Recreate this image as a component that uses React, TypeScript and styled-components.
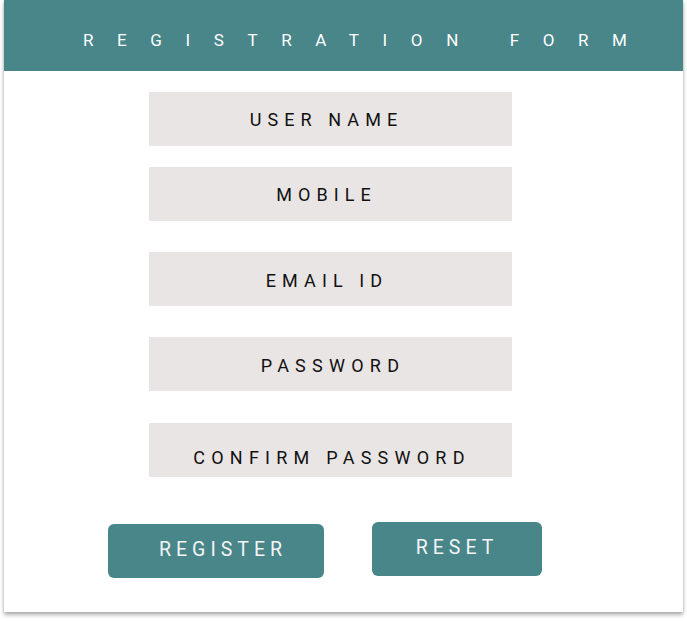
import React from "react";
import styled, { createGlobalStyle } from "styled-components";

const Global = createGlobalStyle`
  html, body { margin: 0; padding: 0; background: #ffffff; }
  body { font-family: Roboto, "Liberation Sans", sans-serif; }
  * { box-sizing: border-box; }
`;

const Card = styled.div`
  width: 679px;
  margin: 0 4px 10px;
  background: #ffffff;
  box-shadow: 0 3px 4px rgba(0, 0, 0, 0.3), 0 0 3px rgba(0, 0, 0, 0.14);
  padding-bottom: 34px;
`;

const Header = styled.header`
  height: 71px;
  background: #48868a;
  padding: 30px 0 0 79px;
`;

const Title = styled.h1`
  margin: 0;
  font-family: Roboto, "Liberation Sans", sans-serif;
  font-weight: 400;
  font-size: 17px;
  line-height: 20px;
  letter-spacing: 23.6px;
  color: #ffffff;
  white-space: pre;
`;

const Form = styled.form`
  display: flex;
  flex-direction: column;
  align-items: flex-start;
  padding: 21px 0 0 145px;
`;

const Field = styled.input<{ $gap: number; $shift?: number; $dx?: number }>`
  width: 363px;
  height: 54px;
  margin-top: ${(p) => p.$gap}px;
  border: none;
  outline: none;
  background: #e9e5e4;
  padding-top: ${(p) => (p.$shift ?? 0) * 2}px;
  padding-bottom: 0;
  padding-left: ${(p) => Math.max(0, (p.$dx ?? 0) * 2)}px;
  padding-right: ${(p) => Math.max(0, -(p.$dx ?? 0) * 2)}px;
  text-align: center;
  font-family: Roboto, "Liberation Sans", sans-serif;
  font-size: 18px;
  letter-spacing: ${(p) => ((p.$dx ?? 0) > 0 ? 6.25 : 6.1)}px;
  color: #111;
  &::placeholder { color: #111; opacity: 1; }
`;

const Buttons = styled.div`
  display: flex;
  align-items: flex-start;
  gap: 48px;
  padding: 45px 0 0 104px;
`;

const Button = styled.button<{ $w: number; $top: number; $pl: number }>`
  width: ${(p) => p.$w}px;
  height: 54px;
  margin-top: ${(p) => p.$top}px;
  border: none;
  border-radius: 6px;
  background: #48868a;
  color: #f4f4f4;
  font-family: Roboto, "Liberation Sans", sans-serif;
  font-size: 19.5px;
  letter-spacing: 5px;
  padding: 0 0 4px ${(p) => p.$pl}px;
  cursor: pointer;
`;

export default function App() {
  return (
    <>
      <Global />
      <Card>
        <Header>
          <Title>REGISTRATION FORM</Title>
        </Header>
        <Form onSubmit={(e) => e.preventDefault()}>
          <Field $gap={0} $dx={-4} placeholder="USER NAME" />
          <Field $gap={21} $shift={-2.5} $dx={-4} placeholder="MOBILE" />
          <Field $gap={31} $shift={1} $dx={-3.5} placeholder="EMAIL ID" type="email" />
          <Field $gap={31} $shift={1.5} $dx={2.5} placeholder="PASSWORD" type="password" />
          <Field $gap={32} $shift={7} $dx={1.5} placeholder="CONFIRM PASSWORD" type="password" />
        </Form>
        <Buttons>
          <Button $w={216} $top={2} $pl={14} type="button">REGISTER</Button>
          <Button $w={170} $top={0} $pl={0} type="button">RESET</Button>
        </Buttons>
      </Card>
    </>
  );
}
